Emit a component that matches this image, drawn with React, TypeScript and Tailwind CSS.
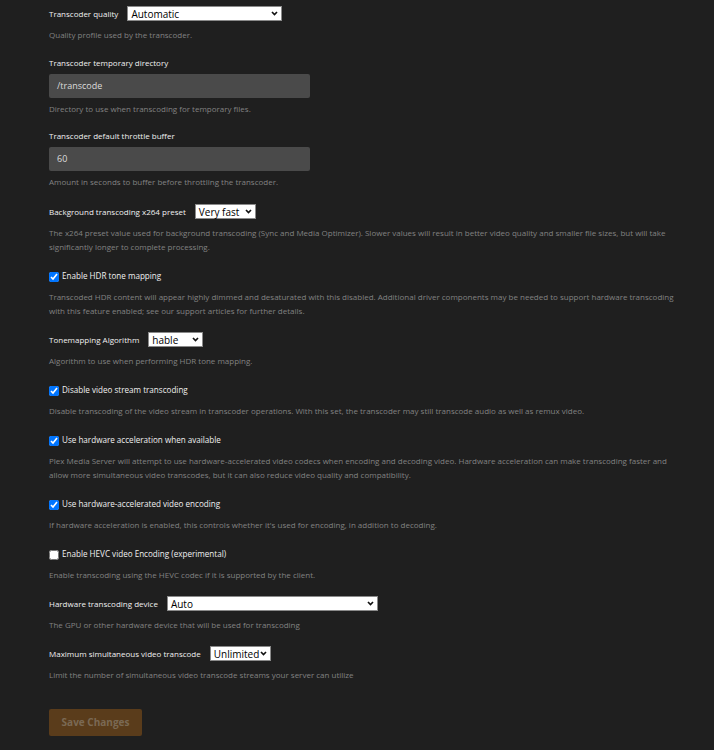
import { ReactNode } from "react";

const font = { fontFamily: '"Open Sans", "Noto Sans", sans-serif' };

function Chevron() {
    return (
        <svg width="7" height="5" viewBox="0 0 8 6" className="shrink-0">
            <path d="M1 1.2 L4 4.2 L7 1.2" fill="none" stroke="#111" strokeWidth="2" />
        </svg>
    );
}

function Select({ value, width }: { value: string; width: string }) {
    return (
        <div className={`flex h-[15px] items-center justify-between whitespace-nowrap border border-[#8a8a8a] bg-white pl-[3px] pr-[3px] text-[10px] leading-none text-black ${width}`}>
            <span>{value}</span>
            <Chevron />
        </div>
    );
}

function Desc({ children, top = "mt-[7px]" }: { children: ReactNode; top?: string }) {
    return <p className={`${top} text-[8px] leading-[14px] text-[#828282]`}>{children}</p>;
}

function SelectRow({ label, value, width, desc }: { label: string; value: string; width: string; desc: ReactNode }) {
    return (
        <div className="mb-[14px]">
            <div className="flex h-[15px] items-center gap-[9px]">
                <span className="text-[8px] font-medium text-[#f0f0f0]">{label}</span>
                <Select value={value} width={width} />
            </div>
            <Desc>{desc}</Desc>
        </div>
    );
}

function InputRow({ label, value, desc, gap }: { label: string; value: string; desc: string; gap: string }) {
    return (
        <div className={gap}>
            <div className="h-[14px] text-[8px] font-medium leading-[14px] text-[#f0f0f0]">{label}</div>
            <div className="mt-[4px] flex h-[24px] w-[261px] items-center rounded-[2px] bg-[#4a4a4a] px-[8px] text-[9px] text-[#dcdcdc]">
                {value}
            </div>
            <p className="mt-[4px] text-[8px] leading-[14px] text-[#828282]">{desc}</p>
        </div>
    );
}

function CheckRow({ label, checked, desc }: { label: string; checked: boolean; desc: ReactNode }) {
    return (
        <div className="mb-[14px]">
            <label className="flex h-[16px] items-center gap-[3px] pt-[1px]">
                <input type="checkbox" defaultChecked={checked} className="m-0 h-[10px] w-[10px] accent-[#0075ff]" />
                <span className="text-[8.1px] font-medium text-[#f0f0f0]">{label}</span>
            </label>
            <Desc top="mt-[6px]">{desc}</Desc>
        </div>
    );
}

export default function App() {
    return (
        <div className="min-h-[750px] bg-[#1f1f1f] pl-[49px] pt-[6px]" style={font}>
            <div className="w-[634px]">
                <SelectRow label="Transcoder quality" value="Automatic" width="w-[155px]" desc="Quality profile used by the transcoder." />
                <InputRow gap="mb-[12.5px]" label="Transcoder temporary directory" value="/transcode" desc="Directory to use when transcoding for temporary files." />
                <InputRow gap="mb-[15.5px]" label="Transcoder default throttle buffer" value="60" desc="Amount in seconds to buffer before throttling the transcoder." />
                <SelectRow
                    label="Background transcoding x264 preset"
                    value="Very fast"
                    width="w-[61px]"
                    desc="The x264 preset value used for background transcoding (Sync and Media Optimizer). Slower values will result in better video quality and smaller file sizes, but will take significantly longer to complete processing."
                />
                <CheckRow
                    label="Enable HDR tone mapping"
                    checked
                    desc="Transcoded HDR content will appear highly dimmed and desaturated with this disabled. Additional driver components may be needed to support hardware transcoding with this feature enabled; see our support articles for further details."
                />
                <SelectRow label="Tonemapping Algorithm" value="hable" width="w-[55px]" desc="Algorithm to use when performing HDR tone mapping." />
                <CheckRow
                    label="Disable video stream transcoding"
                    checked
                    desc="Disable transcoding of the video stream in transcoder operations. With this set, the transcoder may still transcode audio as well as remux video."
                />
                <CheckRow
                    label="Use hardware acceleration when available"
                    checked
                    desc="Plex Media Server will attempt to use hardware-accelerated video codecs when encoding and decoding video. Hardware acceleration can make transcoding faster and allow more simultaneous video transcodes, but it can also reduce video quality and compatibility."
                />
                <CheckRow
                    label="Use hardware-accelerated video encoding"
                    checked
                    desc="If hardware acceleration is enabled, this controls whether it's used for encoding, in addition to decoding."
                />
                <CheckRow
                    label="Enable HEVC video Encoding (experimental)"
                    checked={false}
                    desc="Enable transcoding using the HEVC codec if it is supported by the client."
                />
                <SelectRow label="Hardware transcoding device" value="Auto" width="w-[211px]" desc="The GPU or other hardware device that will be used for transcoding" />
                <SelectRow
                    label="Maximum simultaneous video transcode"
                    value="Unlimited"
                    width="w-[61px]"
                    desc="Limit the number of simultaneous video transcode streams your server can utilize"
                />
                <button className="mt-[13px] h-[27px] w-[93px] rounded-[2px] bg-[#5a3c1b] text-[10px] font-bold text-[#7a6954]">
                    Save Changes
                </button>
            </div>
        </div>
    );
}
